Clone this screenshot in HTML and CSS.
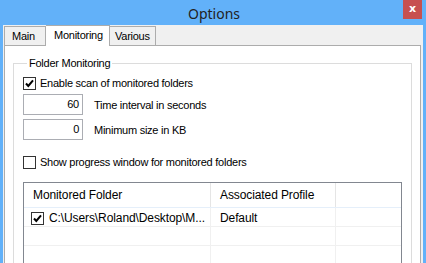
FILE: index.html
```html
<!DOCTYPE html>
<html>
<head>
<meta charset="utf-8">
<link rel="stylesheet" href="styles.css">
</head>
<body>
<div class="window">
  <div class="titlebar">
    <span class="title">Options</span>
    <div class="close">x</div>
  </div>
  <div class="client">
    <div class="tabs">
      <div class="tab tab-main">Main</div>
      <div class="tab tab-active">Monitoring</div>
      <div class="tab tab-various">Various</div>
    </div>
    <div class="panel">
      <fieldset class="group">
        <legend>Folder Monitoring</legend>
        <div class="row check-row">
          <span class="cb checked"><svg viewBox="0 0 11 11" width="11" height="11"><path d="M2 5.5 L4.3 8 L9 2.3" fill="none" stroke="#000" stroke-width="2"/></svg></span>
          <span>Enable scan of monitored folders</span>
        </div>
        <div class="row input-row">
          <div class="num">60</div>
          <span>Time interval in seconds</span>
        </div>
        <div class="row input-row second">
          <div class="num">0</div>
          <span>Minimum size in KB</span>
        </div>
        <div class="row check-row progress">
          <span class="cb"></span>
          <span>Show progress window for monitored folders</span>
        </div>
        <div class="listview">
          <div class="lv-header">
            <div class="col c1">Monitored Folder</div>
            <div class="col c2">Associated Profile</div>
            <div class="col c3"></div>
          </div>
          <div class="lv-row">
            <div class="col c1"><span class="cb small checked"><svg viewBox="0 0 11 11" width="11" height="11"><path d="M2 5.5 L4.3 8 L9 2.3" fill="none" stroke="#000" stroke-width="2"/></svg></span>C:\Users\Roland\Desktop\M...</div>
            <div class="col c2">Default</div>
            <div class="col c3"></div>
          </div>
          <div class="lv-row">
            <div class="col c1"></div>
            <div class="col c2"></div>
            <div class="col c3"></div>
          </div>
          <div class="lv-row">
            <div class="col c1"></div>
            <div class="col c2"></div>
            <div class="col c3"></div>
          </div>
        </div>
      </fieldset>
    </div>
  </div>
</div>
</body>
</html>
```

FILE: styles.css
```css
* { box-sizing: border-box; }
html, body { margin: 0; padding: 0; }
body {
  width: 426px;
  height: 263px;
  overflow: hidden;
  font-family: "Liberation Sans", Arial, sans-serif;
  font-size: 11px;
  letter-spacing: -0.25px;
  color: #000;
}
.window {
  width: 426px;
  height: 263px;
  background: #62b1f9;
  display: flex;
  flex-direction: column;
  overflow: hidden;
}
.titlebar {
  height: 25px;
  flex: none;
  display: flex;
  justify-content: center;
  align-items: center;
  position: relative;
}
.title {
  font-family: "Noto Sans", "Open Sans", sans-serif;
  font-size: 14px;
  letter-spacing: 0;
  color: #222;
  margin-top: 1px;
  margin-left: 2px;
}
.close {
  position: absolute;
  top: 0;
  right: 4px;
  width: 19px;
  height: 19px;
  background: #c75050;
  color: #fff;
  font-weight: bold;
  font-size: 11px;
  font-family: "DejaVu Sans", sans-serif;
  display: flex;
  justify-content: center;
  align-items: center;
  line-height: 1;
  padding-bottom: 2px;
}
.client {
  flex: 1;
  margin: 0 3px 0 3px;
  background: #f0f0f0;
  padding: 1px 2px 0 1px;
  display: flex;
  flex-direction: column;
  min-height: 0;
}
.tabs {
  display: flex;
  align-items: flex-end;
  height: 20px;
  flex: none;
  position: relative;
  z-index: 2;
  margin-bottom: -1px;
}
.tab {
  height: 19px;
  border: 1px solid #acacac;
  border-bottom: none;
  background: #f0f0f0;
  display: flex;
  align-items: center;
  padding: 0 6px;
  margin-bottom: 1px;
}
.tab-main { width: 42px; padding-left: 7px; }
.tab-various { width: 46px; border-left: none; padding-left: 5px; }
.tab-active {
  height: 21px;
  width: 64px;
  background: #fff;
  border-left: none;
  margin-bottom: 0;
  padding-left: 8px;
  padding-bottom: 2px;
}
.panel {
  flex: 1;
  background: #fff;
  border: 1px solid #acacac;
  border-bottom: none;
  position: relative;
  z-index: 1;
  padding: 11px 8px 0 8px;
  min-height: 0;
}
.group {
  margin: 0;
  border: 1px solid #dcdcdc;
  border-bottom: none;
  padding: 6px 9px 0 9px;
  height: 240px;
}
.group legend {
  padding: 0 2px;
  margin-left: 4px;
}
.row {
  display: flex;
  align-items: center;
}
.check-row { height: 16px; gap: 4px; }
.cb {
  width: 13px;
  height: 13px;
  border: 1px solid #333;
  background: #fff;
  display: inline-flex;
  justify-content: center;
  align-items: center;
  flex: none;
}
.input-row { margin-top: 3px; gap: 11px; }
.input-row.second { margin-top: 4px; }
.num {
  width: 60px;
  height: 21px;
  border: 1px solid #abadb3;
  text-align: right;
  padding: 3px 3px 0 0;
}
.progress { margin-top: 14px; }
.listview {
  margin-top: 12px;
  border: 1px solid #828790;
  border-bottom: none;
  margin-right: 0;
  height: 120px;
  font-size: 12px;
  letter-spacing: -0.1px;
}
.lv-header {
  display: flex;
  height: 25px;
  border-bottom: 1px solid #e5effa;
}
.lv-header .col {
  border-right: 1px solid #e5e5e5;
  padding: 5px 0 0 9px;
}
.lv-row {
  display: flex;
  height: 19px;
  border-bottom: 1px solid #f0f0f0;
}
.lv-row .col {
  border-right: 1px solid #f0f0f0;
  padding: 2px 0 0 5px;
  display: flex;
  align-items: center;
  white-space: nowrap;
  overflow: hidden;
}
.c1 { width: 187px; flex: none; }
.c2 { width: 125px; flex: none; }
.c3 { flex: 1; }
.lv-row .c3, .lv-header .c3 { border-right: none; }
.cb.small { margin-left: 1px; margin-right: 5px; }
.lv-row .c1 { padding-left: 6px; }
.lv-row .c2 { padding-left: 9px; }
```
